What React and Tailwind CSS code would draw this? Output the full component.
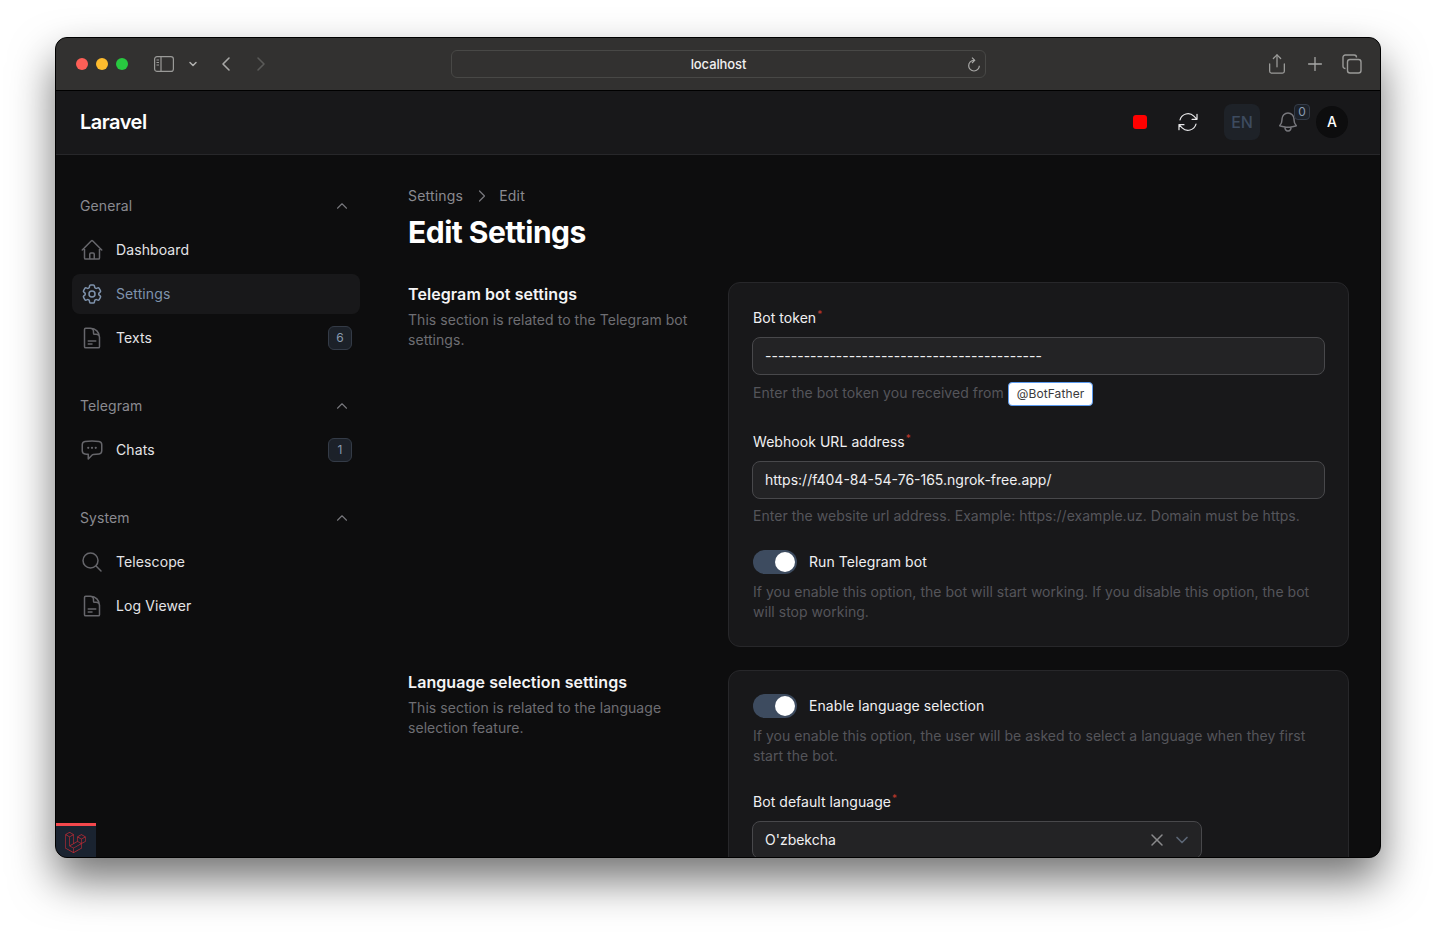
import { ChevronUp, ChevronDown, ChevronLeft, ChevronRight, X, Plus, Share } from 'lucide-react';
import {
  HiOutlineHome,
  HiOutlineCog6Tooth,
  HiOutlineDocumentText,
  HiOutlineChatBubbleLeftEllipsis,
  HiOutlineMagnifyingGlass,
  HiOutlineBell,
  HiOutlineArrowPath,
} from 'react-icons/hi2';
import { SiLaravel } from 'react-icons/si';

function NavItem({ icon: Icon, label, badge, active }) {
  return (
    <div className={`flex h-10 items-center gap-3 rounded-lg px-2 ${active ? 'bg-[#18181a]' : ''}`}>
      <Icon className={`h-6 w-6 shrink-0 ${active ? 'text-[#7f93ad]' : 'text-[#66666b]'}`} />
      <span className={`flex-1 text-sm tracking-[0.1px] ${active ? 'text-[#7f93ad]' : 'text-[#e4e4e7]'}`}>{label}</span>
      {badge && (
        <span className="flex h-6 w-6 items-center justify-center rounded-md border border-[#343b47] bg-[#1c2129] text-xs text-[#8a9bb0]">
          {badge}
        </span>
      )}
    </div>
  );
}

function NavGroup({ title, children }) {
  return (
    <div className="mb-7">
      <div className="flex h-10 items-center justify-between pl-2 pr-[9px]">
        <span className="text-sm tracking-[0.1px] text-[#8a8a90]">{title}</span>
        <ChevronUp className="h-[18px] w-[18px] text-[#77777c]" strokeWidth={1.5} />
      </div>
      <div className="mt-1 flex flex-col gap-1">{children}</div>
    </div>
  );
}

function Label({ children }) {
  return (
    <div className="h-5 text-sm leading-5 tracking-[0.05px] text-[#f0f0f2]">
      {children}
      <sup className="ml-px text-[10px] text-[#c0392b]">*</sup>
    </div>
  );
}

function Hint({ children, className = '' }) {
  return <p className={`text-sm leading-5 tracking-[0.03px] text-[#55555a] ${className}`}>{children}</p>;
}

function TextInput({ value }) {
  return (
    <div className="-mx-px mt-[9px] flex h-[38px] items-center rounded-lg border border-[#48484b] bg-[#232325] px-3 text-sm text-[#f0f0f2]">
      {value}
    </div>
  );
}

function Toggle({ label }) {
  return (
    <div className="flex items-center gap-3">
      <div className="flex h-6 w-11 items-center justify-end rounded-full bg-[#3d4b5f] pr-0.5">
        <div className="h-5 w-5 rounded-full bg-white" />
      </div>
      <span className="text-sm tracking-[0.08px] text-[#f0f0f2]">{label}</span>
    </div>
  );
}

function Section({ title, description, children }) {
  return (
    <div className="grid grid-cols-[296px_1fr] gap-6">
      <div>
        <h2 className="text-base leading-6 font-semibold tracking-[0.08px] text-[#f4f4f5]">{title}</h2>
        <p className="mt-1 text-sm leading-5 tracking-[0.05px] text-[#6e6e73]">{description}</p>
      </div>
      <div className="rounded-xl border border-[#27272a] bg-[#18181a] px-6 py-6">{children}</div>
    </div>
  );
}

export default function App() {
  return (
    <div className="h-[932px] w-[1436px] overflow-hidden bg-white pl-[55px] pt-[37px] font-[Inter,sans-serif]">
      <div className="flex h-[821px] w-[1326px] flex-col overflow-hidden rounded-xl border border-[#000] bg-[#0d0d0e] shadow-[0_22px_44px_rgba(0,0,0,0.55)]">
        {/* browser bar */}
        <div className="flex h-[53px] shrink-0 items-center border-b border-black bg-[#323130] pl-5 pr-[18px]">
          <div className="flex gap-2">
            <div className="h-3 w-3 rounded-full bg-[#fe5f57]" />
            <div className="h-3 w-3 rounded-full bg-[#febc2e]" />
            <div className="h-3 w-3 rounded-full bg-[#28c840]" />
          </div>
          <div className="ml-[26px] flex items-center">
            <svg viewBox="0 0 20 16" className="h-4 w-5" fill="none" stroke="#9a9a98" strokeWidth="1.2">
              <rect x="0.6" y="0.6" width="18.8" height="14.8" rx="2.5" />
              <path d="M7 1v14" />
              <path d="M2.5 4h2.5M2.5 6.5h2.5M2.5 9h2.5" strokeWidth="1" />
            </svg>
            <ChevronDown className="ml-[13px] h-3 w-3 text-[#b0b0ae]" strokeWidth={3} />
          </div>
          <ChevronLeft className="ml-[15px] h-6 w-6 text-[#a8a8a6]" strokeWidth={1.6} />
          <ChevronRight className="ml-[11px] h-6 w-6 text-[#5a5a58]" strokeWidth={1.6} />
          <div className="relative ml-[178px] flex h-7 w-[535px] items-center justify-center rounded-md border border-[#484846] pt-px text-[13px] font-medium tracking-[-0.1px] text-[#f0f0f0]">
            localhost
            <svg viewBox="0 0 24 24" className="absolute right-[3px] h-4 w-4" fill="none" stroke="#a8a8a6" strokeWidth="1.8">
              <path d="M12 5a8 8 0 1 0 8 8" />
              <path d="M9 1l4 4-4 4" />
            </svg>
          </div>
          <div className="ml-auto flex items-center gap-4">
            <Share className="h-[22px] w-[22px] text-[#9a9a98]" strokeWidth={1.4} />
            <Plus className="h-[22px] w-[22px] text-[#a8a8a6]" strokeWidth={1.4} />
            <svg viewBox="0 0 20 20" className="h-5 w-5" fill="none" stroke="#9a9a98" strokeWidth="1.4">
              <rect x="5.5" y="5.5" width="13.5" height="13.5" rx="2.5" />
              <path d="M3.5 14.5h-.2A2.3 2.3 0 0 1 1 12.2V3.3A2.3 2.3 0 0 1 3.3 1h8.9a2.3 2.3 0 0 1 2.3 2.3v.2" />
            </svg>
          </div>
        </div>

        {/* app header */}
        <div className="flex h-[64px] shrink-0 items-center border-b border-[#27272a] bg-[#18181a] pb-px pl-6 pr-8">
          <span className="text-xl font-semibold tracking-[-0.5px] text-white">Laravel</span>
          <div className="ml-auto flex items-center">
            <div className="h-[14px] w-[14px] rounded-[3px] bg-[#ff0000]" />
            <HiOutlineArrowPath className="ml-[29px] h-6 w-6 text-[#e8e8ea]" strokeWidth={1.2} />
            <div className="ml-[24px] flex h-9 w-9 items-center justify-center rounded-lg bg-[#1e2228] text-base font-medium text-[#3d4b5f]">
              EN
            </div>
            <div className="relative ml-4 h-6 w-6">
              <HiOutlineBell className="h-6 w-6 text-[#77777c]" />
              <span className="absolute -right-[10px] -top-[6px] flex h-4 w-4 items-center justify-center rounded border border-[#343b47] bg-[#1c2129] text-xs text-[#8a9bb0]">
                0
              </span>
            </div>
            <div className="ml-4 flex h-8 w-8 items-center justify-center rounded-full bg-[#0d0d0e] text-sm font-medium text-white">
              A
            </div>
          </div>
        </div>

        <div className="relative flex min-h-0 flex-1">
          {/* sidebar */}
          <aside className="w-[320px] shrink-0 px-4 pt-[31px]">
            <NavGroup title="General">
              <NavItem icon={HiOutlineHome} label="Dashboard" />
              <NavItem icon={HiOutlineCog6Tooth} label="Settings" active />
              <NavItem icon={HiOutlineDocumentText} label="Texts" badge="6" />
            </NavGroup>
            <NavGroup title="Telegram">
              <NavItem icon={HiOutlineChatBubbleLeftEllipsis} label="Chats" badge="1" />
            </NavGroup>
            <NavGroup title="System">
              <NavItem icon={HiOutlineMagnifyingGlass} label="Telescope" />
              <NavItem icon={HiOutlineDocumentText} label="Log Viewer" />
            </NavGroup>
          </aside>

          {/* content */}
          <main className="min-w-0 flex-1 pl-8 pr-[31px] pt-[31px]">
            <div className="flex items-center text-sm leading-5 tracking-[0.2px] text-[#8a8a90]">
              Settings
              <ChevronRight className="ml-[9px] mr-[7px] h-5 w-5 text-[#77777c]" strokeWidth={1.5} />
              Edit
            </div>
            <h1 className="mt-2 text-[30px] leading-9 font-bold tracking-[-0.5px] text-white">Edit Settings</h1>

            <div className="mt-8 flex flex-col gap-[23px]">
              <Section title="Telegram bot settings" description="This section is related to the Telegram bot settings.">
                <div className="pt-px">
                  <Label>Bot token</Label>
                </div>
                <TextInput value="-------------------------------------------" />
                <div className="mt-1.5 flex h-6 items-center gap-1">
                  <Hint>Enter the bot token you received from</Hint>
                  <span className="mt-[2px] flex h-6 items-center rounded border border-[#5b9bf0] bg-white px-2 text-xs tracking-[0.1px] text-[#3a3a3c]">
                    @BotFather
                  </span>
                </div>
                <div className="mt-[27px]">
                  <Label>Webhook URL address</Label>
                </div>
                <TextInput value="https://f404-84-54-76-165.ngrok-free.app/" />
                <Hint className="mt-[7px]">Enter the website url address. Example: https://example.uz. Domain must be https.</Hint>
                <div className="mt-6">
                  <Toggle label="Run Telegram bot" />
                </div>
                <Hint className="mt-2">
                  If you enable this option, the bot will start working. If you disable this option, the bot will stop working.
                </Hint>
              </Section>

              <Section title="Language selection settings" description="This section is related to the language selection feature.">
                <div className="-mt-px">
                  <Toggle label="Enable language selection" />
                </div>
                <Hint className="mt-2">
                  If you enable this option, the user will be asked to select a language when they first start the bot.
                </Hint>
                <div className="mt-[26px]">
                  <Label>Bot default language</Label>
                </div>
                <div className="-ml-px mt-[9px] flex h-[38px] w-[450px] items-center rounded-lg border border-[#48484b] bg-[#232325] pl-3 pr-[9px] text-sm text-[#f0f0f2]">
                  <span className="flex-1">O'zbekcha</span>
                  <X className="h-5 w-5 text-[#8a8a8c]" strokeWidth={1.8} />
                  <ChevronDown className="ml-[5px] h-5 w-5 text-[#5c6675]" strokeWidth={2} />
                </div>
              </Section>
            </div>
          </main>

          {/* debug bar tab */}
          <div className="absolute bottom-0 left-0 flex h-[34px] w-10 items-center justify-center border-t-[3px] border-[#f4484d] bg-[#1a2330] pr-px pt-px">
            <SiLaravel className="h-[21px] w-[21px] text-[#b82b35]" />
          </div>
        </div>
      </div>
    </div>
  );
}
